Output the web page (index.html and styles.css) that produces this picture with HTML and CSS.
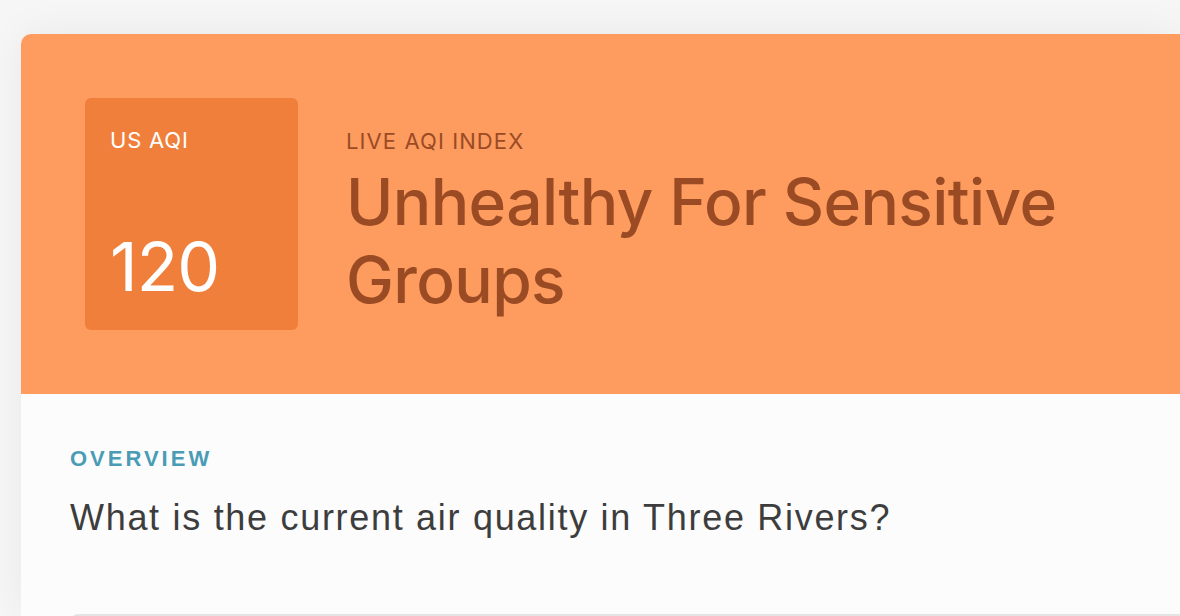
FILE: index.html
```html
<!DOCTYPE html>
<html lang="en">
  <head>
    <meta charset="UTF-8" />
    <meta name="viewport" content="width=device-width, initial-scale=1.0" />
    <title>Three Rivers Air Quality</title>
    <link rel="stylesheet" href="styles.css">
  </head>
  <body>
    <div class="card">
      <div class="aqi-header">
        <div class="aqi-box">
          <span class="aqi-label">US AQI</span>
          <span class="aqi-value">120</span>
        </div>
        <div class="aqi-status">
          <span class="status-label">LIVE AQI INDEX</span>
          <h1>Unhealthy For Sensitive<br />Groups</h1>
        </div>
      </div>

      <div class="overview">
        <div class="section-label">OVERVIEW</div>
        <h2>What is the current air quality in Three Rivers?</h2>
        <div class="overview-panel"></div>
      </div>
    </div>
  </body>
</html>
```

FILE: styles.css
```css
html,
body {
  margin: 0;
  height: 100%;
  overflow: hidden;
}

body {
  background-color: #f6f6f6;
  padding: 34px 0 0 21px;
  box-sizing: border-box;
}

.card {
  width: 1159px;
  height: 582px;
  background-color: #fcfcfc;
  border-radius: 10px 0 0 0;
  box-shadow: 0 0 40px rgba(0, 0, 0, 0.06);
  overflow: hidden;
}

.aqi-header {
  display: flex;
  align-items: flex-start;
  gap: 48px;
  padding: 64px;
  background-color: #fe9c5f;
}

.aqi-box {
  display: flex;
  flex-direction: column;
  justify-content: space-between;
  width: 213px;
  height: 232px;
  padding: 30px 25px 32px;
  box-sizing: border-box;
  background-color: #f07f3b;
  border-radius: 6px;
  color: #fff;
  font-family: Inter, "Noto Sans", sans-serif;
}

.aqi-label {
  font-size: 22px;
  line-height: 24px;
  letter-spacing: 0.8px;
}

.aqi-value {
  font-size: 68px;
  line-height: 64px;
  letter-spacing: -1px;
}

.aqi-status {
  display: flex;
  flex-direction: column;
  padding-top: 31px;
  color: #9a4b24;
  font-family: Inter, "Noto Sans", sans-serif;
}

.status-label {
  font-size: 22px;
  line-height: 24px;
  letter-spacing: 1.1px;
}

h1 {
  margin: 10px 0 0;
  font-size: 64px;
  font-weight: 500;
  line-height: 78px;
  letter-spacing: -0.6px;
}

.overview {
  padding: 52px 0 0 49px;
  font-family: "Liberation Sans", Arial, sans-serif;
}

.section-label {
  color: #4a9cb6;
  font-size: 22px;
  font-weight: bold;
  letter-spacing: 3px;
  line-height: 26px;
}

h2 {
  margin: 26px 0 0;
  color: #3d3d3d;
  font-size: 36px;
  font-weight: normal;
  line-height: 40px;
  letter-spacing: 1.7px;
}

.overview-panel {
  height: 40px;
  margin-top: 76px;
  border-top: 2px solid #e4e4e4;
  border-radius: 8px 0 0 0;
}
```
